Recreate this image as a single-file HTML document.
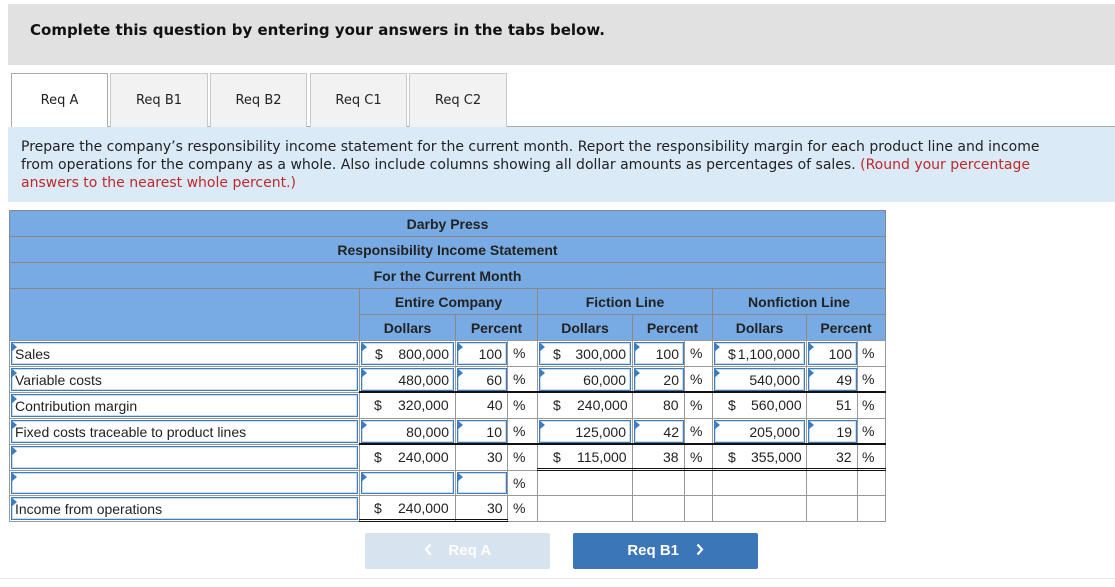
<!DOCTYPE html>
<html><head><meta charset="utf-8"><style>
*{margin:0;padding:0;box-sizing:border-box}
body{width:1115px;height:587px;background:#fff;position:relative;overflow:hidden;font-family:"Liberation Sans",Arial,sans-serif;color:#222}
.a{position:absolute}
.top{left:8px;top:4px;width:1107px;height:61px;background:#e1e1e1;font:bold 15px "DejaVu Sans",Verdana,sans-serif;padding:17px 0 0 22px;color:#111}
.tab{top:73px;height:54px;background:#f2f2f2;border:1px solid #c8c8c8;border-bottom:none;font:13px "DejaVu Sans",Verdana,sans-serif;text-align:center;line-height:54px;color:#222}
.ins{left:8px;top:127px;width:1107px;height:75px;background:#dbeaf7;font:14px "DejaVu Sans",Verdana,sans-serif;padding:11px 50px 0 13px;line-height:18px;color:#222}
.ins span{color:#c0282b}
.h{background:#78abe3;border:1px solid #888;font-weight:bold;font-size:14px;text-align:center;color:#222}
.c{border:1px solid #999;background:#fff;font-size:14px}
.in{background:#fff;border:1px solid #3d7cc0;box-shadow:inset 0 0 0 1px #c9dcef;font-size:14px}
.in:before{content:"";position:absolute;left:-1px;top:-1px;border-top:5px solid transparent;border-bottom:5px solid transparent;border-left:6px solid #3d7cc0}
.t{position:absolute;top:4px;white-space:nowrap;font-size:14px}
.r{right:4px}
.btn{top:533px;height:36px;border-radius:2px;font-weight:bold;font-size:15px;color:#fff;text-align:center;line-height:36px}
.btn svg{vertical-align:-1px}
</style></head><body>
<div class="a top">Complete this question by entering your answers in the tabs below.</div>
<div class="a" style="left:11px;top:126px;width:1104px;height:1px;background:#aaa"></div>
<div class="a tab" style="left:11px;width:97px;background:#fff;height:55px;border-color:#aaa">Req A</div>
<div class="a tab" style="left:110px;width:98px">Req B1</div>
<div class="a tab" style="left:210px;width:97px">Req B2</div>
<div class="a tab" style="left:310px;width:97px">Req C1</div>
<div class="a tab" style="left:409px;width:98px">Req C2</div>
<div class="a ins">Prepare the company’s responsibility income statement for the current month. Report the responsibility margin for each product line and income from operations for the company as a whole. Also include columns showing all dollar amounts as percentages of sales. <span>(Round your percentage answers to the nearest whole percent.)</span></div>

<div class="a h" style="left:9px;top:210px;width:877px;height:27px;line-height:26px">Darby Press</div>
<div class="a h" style="left:9px;top:236px;width:877px;height:27px;line-height:26px">Responsibility Income Statement</div>
<div class="a h" style="left:9px;top:262px;width:877px;height:27px;line-height:26px">For the Current Month</div>
<div class="a h" style="left:9px;top:288px;width:351px;height:53px"></div>
<div class="a h" style="left:359px;top:288px;width:179px;height:27px;line-height:26px">Entire Company</div>
<div class="a h" style="left:537px;top:288px;width:176px;height:27px;line-height:26px">Fiction Line</div>
<div class="a h" style="left:712px;top:288px;width:174px;height:27px;line-height:26px">Nonfiction Line</div>
<div class="a h" style="left:359px;top:314px;width:97px;height:27px;line-height:26px">Dollars</div>
<div class="a h" style="left:455px;top:314px;width:83px;height:27px;line-height:26px">Percent</div>
<div class="a h" style="left:537px;top:314px;width:96px;height:27px;line-height:26px">Dollars</div>
<div class="a h" style="left:632px;top:314px;width:81px;height:27px;line-height:26px">Percent</div>
<div class="a h" style="left:712px;top:314px;width:95px;height:27px;line-height:26px">Dollars</div>
<div class="a h" style="left:806px;top:314px;width:80px;height:27px;line-height:26px">Percent</div>

<div class="a c" style="left:9px;top:340px;width:877px;height:182px;border-color:#999"></div>
<div class="a" style="left:359px;top:340px;width:1px;height:181px;background:#999"></div>
<div class="a" style="left:455px;top:340px;width:1px;height:181px;background:#999"></div>
<div class="a" style="left:507px;top:340px;width:1px;height:181px;background:#999"></div>
<div class="a" style="left:537px;top:340px;width:1px;height:181px;background:#999"></div>
<div class="a" style="left:632px;top:340px;width:1px;height:181px;background:#999"></div>
<div class="a" style="left:684px;top:340px;width:1px;height:181px;background:#999"></div>
<div class="a" style="left:712px;top:340px;width:1px;height:181px;background:#999"></div>
<div class="a" style="left:806px;top:340px;width:1px;height:181px;background:#999"></div>
<div class="a" style="left:857px;top:340px;width:1px;height:181px;background:#999"></div>
<div class="a" style="left:9px;top:366px;width:877px;height:1px;background:#999"></div>
<div class="a" style="left:359px;top:391px;width:527px;height:2px;background:#111"></div>
<div class="a" style="left:9px;top:392px;width:350px;height:1px;background:#999"></div>
<div class="a" style="left:9px;top:418px;width:877px;height:1px;background:#999"></div>
<div class="a" style="left:359px;top:443px;width:527px;height:2px;background:#111"></div>
<div class="a" style="left:9px;top:444px;width:350px;height:1px;background:#999"></div>
<div class="a" style="left:537px;top:468px;width:349px;height:1px;background:#111"></div>
<div class="a" style="left:537px;top:470px;width:349px;height:1px;background:#111"></div>
<div class="a" style="left:9px;top:470px;width:528px;height:1px;background:#999"></div>
<div class="a" style="left:9px;top:495px;width:877px;height:1px;background:#999"></div>
<div class="a" style="left:359px;top:519px;width:149px;height:1px;background:#111"></div>
<div class="a" style="left:359px;top:521px;width:149px;height:1px;background:#111"></div>

<div class="a in" style="left:11px;top:342px;width:347px;height:23px"><span class="t" style="left:3px;top:3px">Sales</span></div>
<div class="a in" style="left:11px;top:368px;width:347px;height:23px"><span class="t" style="left:3px;top:3px">Variable costs</span></div>
<div class="a in" style="left:11px;top:394px;width:347px;height:23px"><span class="t" style="left:3px;top:3px">Contribution margin</span></div>
<div class="a in" style="left:11px;top:420px;width:347px;height:23px"><span class="t" style="left:3px;top:3px">Fixed costs traceable to product lines</span></div>
<div class="a in" style="left:11px;top:446px;width:347px;height:23px"></div>
<div class="a in" style="left:11px;top:472px;width:347px;height:22px"></div>
<div class="a in" style="left:11px;top:497px;width:347px;height:23px"><span class="t" style="left:3px;top:3px">Income from operations</span></div>

<div class="a in" style="left:361px;top:342px;width:93px;height:23px"><span class="t" style="left:13px;top:3px">$</span><span class="t r" style="top:3px">800,000</span></div>
<div class="a in" style="left:457px;top:342px;width:50px;height:23px"><span class="t r" style="top:3px">100</span></div>
<div class="a in" style="left:539px;top:342px;width:92px;height:23px"><span class="t" style="left:13px;top:3px">$</span><span class="t r" style="top:3px">300,000</span></div>
<div class="a in" style="left:634px;top:342px;width:50px;height:23px"><span class="t r" style="top:3px">100</span></div>
<div class="a in" style="left:714px;top:342px;width:91px;height:23px"><span class="t" style="left:13px;top:3px">$</span><span class="t r" style="top:3px">1,100,000</span></div>
<div class="a in" style="left:808px;top:342px;width:49px;height:23px"><span class="t r" style="top:3px">100</span></div>
<div class="a in" style="left:361px;top:368px;width:93px;height:23px"><span class="t r" style="top:3px">480,000</span></div>
<div class="a in" style="left:457px;top:368px;width:50px;height:23px"><span class="t r" style="top:3px">60</span></div>
<div class="a in" style="left:539px;top:368px;width:92px;height:23px"><span class="t r" style="top:3px">60,000</span></div>
<div class="a in" style="left:634px;top:368px;width:50px;height:23px"><span class="t r" style="top:3px">20</span></div>
<div class="a in" style="left:714px;top:368px;width:91px;height:23px"><span class="t r" style="top:3px">540,000</span></div>
<div class="a in" style="left:808px;top:368px;width:49px;height:23px"><span class="t r" style="top:3px">49</span></div>
<span class="t" style="left:374px;top:397px">$</span><span class="t" style="left:398px;top:397px">320,000</span>
<span class="t" style="left:487px;top:397px">40</span>
<span class="t" style="left:553px;top:397px">$</span><span class="t" style="left:577px;top:397px">240,000</span>
<span class="t" style="left:663px;top:397px">80</span>
<span class="t" style="left:728px;top:397px">$</span><span class="t" style="left:751px;top:397px">560,000</span>
<span class="t" style="left:836px;top:397px">51</span>
<div class="a in" style="left:361px;top:420px;width:93px;height:23px"><span class="t r" style="top:3px">80,000</span></div>
<div class="a in" style="left:457px;top:420px;width:50px;height:23px"><span class="t r" style="top:3px">10</span></div>
<div class="a in" style="left:539px;top:420px;width:92px;height:23px"><span class="t r" style="top:3px">125,000</span></div>
<div class="a in" style="left:634px;top:420px;width:50px;height:23px"><span class="t r" style="top:3px">42</span></div>
<div class="a in" style="left:714px;top:420px;width:91px;height:23px"><span class="t r" style="top:3px">205,000</span></div>
<div class="a in" style="left:808px;top:420px;width:49px;height:23px"><span class="t r" style="top:3px">19</span></div>
<span class="t" style="left:374px;top:449px">$</span><span class="t" style="left:398px;top:449px">240,000</span>
<span class="t" style="left:487px;top:449px">30</span>
<span class="t" style="left:553px;top:449px">$</span><span class="t" style="left:577px;top:449px">115,000</span>
<span class="t" style="left:663px;top:449px">38</span>
<span class="t" style="left:728px;top:449px">$</span><span class="t" style="left:751px;top:449px">355,000</span>
<span class="t" style="left:836px;top:449px">32</span>
<div class="a in" style="left:361px;top:472px;width:93px;height:22px"></div>
<div class="a in" style="left:457px;top:472px;width:50px;height:22px"></div>
<span class="t" style="left:374px;top:500px">$</span><span class="t" style="left:398px;top:500px">240,000</span>
<span class="t" style="left:487px;top:500px">30</span>
<span class="t" style="left:513px;top:345px">%</span><span class="t" style="left:690px;top:345px">%</span><span class="t" style="left:862px;top:345px">%</span>
<span class="t" style="left:513px;top:371px">%</span><span class="t" style="left:690px;top:371px">%</span><span class="t" style="left:862px;top:371px">%</span>
<span class="t" style="left:513px;top:397px">%</span><span class="t" style="left:690px;top:397px">%</span><span class="t" style="left:862px;top:397px">%</span>
<span class="t" style="left:513px;top:423px">%</span><span class="t" style="left:690px;top:423px">%</span><span class="t" style="left:862px;top:423px">%</span>
<span class="t" style="left:513px;top:449px">%</span><span class="t" style="left:690px;top:449px">%</span><span class="t" style="left:862px;top:449px">%</span>
<span class="t" style="left:513px;top:475px">%</span>
<span class="t" style="left:513px;top:500px">%</span>

<div class="a btn" style="left:365px;width:185px;background:#d8e3f0"><svg width="8" height="13" viewBox="0 0 8 13"><path d="M6.5 1.5 L2 6.5 L6.5 11.5" fill="none" stroke="#fff" stroke-width="2.2"/></svg>&nbsp;&nbsp;&nbsp; Req A</div>
<div class="a btn" style="left:573px;width:185px;background:#3b76b9">Req B1 &nbsp;&nbsp; <svg width="8" height="13" viewBox="0 0 8 13"><path d="M1.5 1.5 L6 6.5 L1.5 11.5" fill="none" stroke="#fff" stroke-width="2.2"/></svg></div>
<div class="a" style="left:0;top:578px;width:1115px;height:1px;background:#e8e8e8"></div>
</body></html>
